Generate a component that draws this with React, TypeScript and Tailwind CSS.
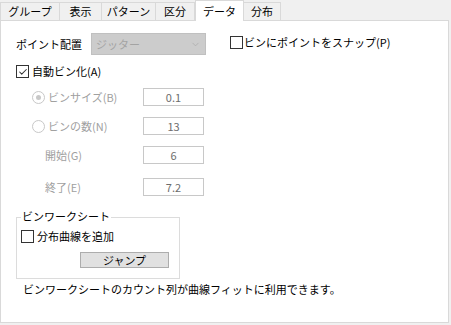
import { Check, ChevronDown } from 'lucide-react';

const TABS = ['グループ', '表示', 'パターン', '区分', 'データ', '分布'];
const TAB_W = ['w-[60px]', 'w-[43px]', 'w-[55px]', 'w-[40px]', 'w-[49px]', 'w-[38px]'];

function Box({ checked }: { checked?: boolean }) {
  return (
    <span className="flex h-[13px] w-[13px] items-center justify-center border border-[#333] bg-white">
      {checked && <Check className="h-[10px] w-[10px] text-[#333]" strokeWidth={2.5} />}
    </span>
  );
}

function Radio({ checked }: { checked?: boolean }) {
  return (
    <span className="flex h-[13px] w-[13px] items-center justify-center rounded-full border border-[#c8c8c8] bg-white">
      {checked && <span className="h-[5px] w-[5px] rounded-full bg-[#c8c8c8]" />}
    </span>
  );
}

function Field({ value }: { value: string }) {
  return (
    <div className="flex h-[18px] w-[61px] items-center justify-center border border-[#c8c8c8] bg-white text-[#6d6d6d]">
      {value}
    </div>
  );
}

export default function App() {
  return (
    <div
      className="h-[325px] w-[451px] overflow-hidden bg-[#f0f0f0] text-[11px] leading-none text-black"
      style={{ fontFamily: '"Noto Sans CJK JP", "Noto Sans", sans-serif' }}
    >
      <div className="flex h-[20px] items-end">
        {TABS.map((t, i) =>
          i === 4 ? (
            <div
              key={t}
              className={`relative z-10 -mb-px flex h-[21px] items-center justify-center border-x border-t border-[#d9d9d9] bg-white ${TAB_W[i]}`}
            >
              {t}
            </div>
          ) : (
            <div
              key={t}
              className={`-ml-px flex h-[18px] items-center justify-center border border-b-0 border-[#d9d9d9] bg-[#f0f0f0] first:ml-0 ${TAB_W[i]}`}
            >
              {t}
            </div>
          )
        )}
      </div>

      <div className="h-[303px] w-[449px] border border-[#d9d9d9] bg-white pl-[15px]">
        <div className="mt-[12px] flex items-center">
          <span className="w-[75px]">ポイント配置</span>
          <div className="flex h-[22px] w-[115px] items-center justify-between border border-[#c0c0c0] bg-[#cccccc] px-[4px] text-[#a3a3a3]">
            <span>ジッター</span>
            <ChevronDown className="h-[11px] w-[11px] text-[#a8a8a8]" strokeWidth={1.5} />
          </div>
          <label className="ml-[24px] flex items-center gap-[1px] self-start pt-[3px]">
            <Box />
            <span>ビンにポイントをスナップ(P)</span>
          </label>
        </div>

        <label className="mt-[10px] flex items-center gap-[3px]">
          <Box checked />
          <span>自動ビン化(A)</span>
        </label>

        <div className="mt-[10px] flex flex-col gap-[11px] pl-[16px] text-[#a0a0a0]">
          <div className="flex items-center">
            <div className="flex w-[111px] items-center gap-[3px]">
              <Radio checked />
              <span>ビンサイズ(B)</span>
            </div>
            <Field value="0.1" />
          </div>
          <div className="flex items-center">
            <div className="flex w-[111px] items-center gap-[3px]">
              <Radio />
              <span>ビンの数(N)</span>
            </div>
            <Field value="13" />
          </div>
          <div className="flex items-center">
            <span className="w-[111px] pl-[13px]">開始(G)</span>
            <Field value="6" />
          </div>
          <div className="mt-[3px] flex items-center">
            <span className="w-[111px] pl-[13px]">終了(E)</span>
            <Field value="7.2" />
          </div>
        </div>

        <div className="relative mt-[21px] h-[62px] w-[164px] border border-[#dcdcdc] px-[4px] pt-[12px]">
          <span className="absolute left-[4px] top-[-7px] bg-white px-[1px]">ビンワークシート</span>
          <label className="flex items-center gap-[3px]">
            <Box />
            <span>分布曲線を追加</span>
          </label>
          <button className="ml-[59px] mt-[9px] flex h-[16px] w-[89px] items-center justify-center border border-[#adadad] bg-[#e1e1e1]">
            ジャンプ
          </button>
        </div>

        <p className="mt-[5px] pl-[7px]">ビンワークシートのカウント列が曲線フィットに利用できます。</p>
      </div>
    </div>
  );
}
